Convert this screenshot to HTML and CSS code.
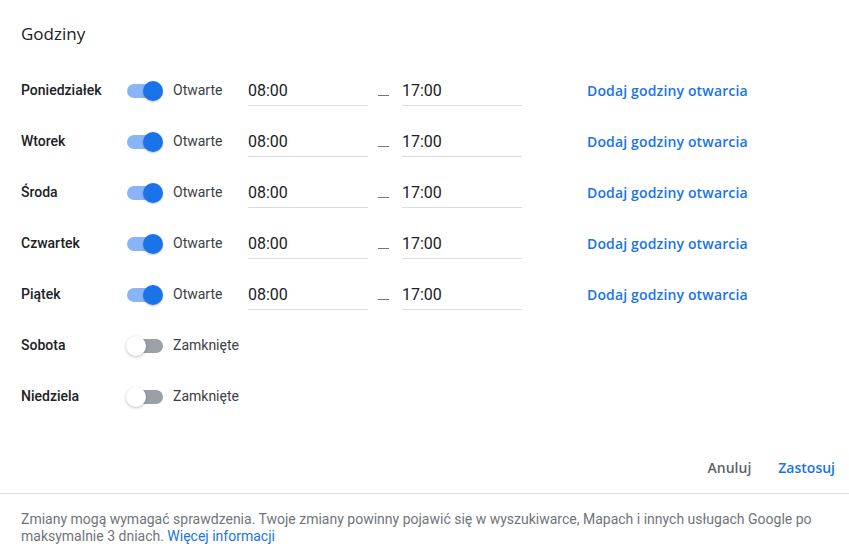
FILE: index.html
```html
<!DOCTYPE html>
<html lang="pl">
<head>
<meta charset="utf-8">
<title>Godziny</title>
<link rel="stylesheet" href="styles.css">
</head>
<body>
<div class="dialog">
  <h1 class="title">Godziny</h1>
  <div class="rows">
    <div class="row">
      <div class="day">Poniedziałek</div>
      <div class="toggle on"><span class="track"></span><span class="thumb"></span></div>
      <div class="state">Otwarte</div>
      <div class="time">08:00</div>
      <div class="dash"></div>
      <div class="time">17:00</div>
      <a class="add" href="#">Dodaj godziny otwarcia</a>
    </div>
    <div class="row">
      <div class="day">Wtorek</div>
      <div class="toggle on"><span class="track"></span><span class="thumb"></span></div>
      <div class="state">Otwarte</div>
      <div class="time">08:00</div>
      <div class="dash"></div>
      <div class="time">17:00</div>
      <a class="add" href="#">Dodaj godziny otwarcia</a>
    </div>
    <div class="row">
      <div class="day">Środa</div>
      <div class="toggle on"><span class="track"></span><span class="thumb"></span></div>
      <div class="state">Otwarte</div>
      <div class="time">08:00</div>
      <div class="dash"></div>
      <div class="time">17:00</div>
      <a class="add" href="#">Dodaj godziny otwarcia</a>
    </div>
    <div class="row">
      <div class="day">Czwartek</div>
      <div class="toggle on"><span class="track"></span><span class="thumb"></span></div>
      <div class="state">Otwarte</div>
      <div class="time">08:00</div>
      <div class="dash"></div>
      <div class="time">17:00</div>
      <a class="add" href="#">Dodaj godziny otwarcia</a>
    </div>
    <div class="row">
      <div class="day">Piątek</div>
      <div class="toggle on"><span class="track"></span><span class="thumb"></span></div>
      <div class="state">Otwarte</div>
      <div class="time">08:00</div>
      <div class="dash"></div>
      <div class="time">17:00</div>
      <a class="add" href="#">Dodaj godziny otwarcia</a>
    </div>
    <div class="row">
      <div class="day">Sobota</div>
      <div class="toggle off"><span class="track"></span><span class="thumb"></span></div>
      <div class="state">Zamknięte</div>
    </div>
    <div class="row">
      <div class="day">Niedziela</div>
      <div class="toggle off"><span class="track"></span><span class="thumb"></span></div>
      <div class="state">Zamknięte</div>
    </div>
  </div>
  <div class="actions">
    <button class="btn cancel">Anuluj</button>
    <button class="btn apply">Zastosuj</button>
  </div>
  <div class="footer">
    <div class="line">Zmiany mogą wymagać sprawdzenia. Twoje zmiany powinny pojawić się w wyszukiwarce, Mapach i innych usługach Google po</div>
    <div class="line">maksymalnie 3 dniach. <a href="#" class="more">Więcej informacji</a></div>
  </div>
</div>
</body>
</html>
```

FILE: styles.css
```css
* { box-sizing: border-box; }

html, body {
  margin: 0;
  padding: 0;
  background: #ffffff;
}

body {
  font-family: Roboto, "Liberation Sans", Arial, sans-serif;
  color: #202124;
}

.dialog {
  width: 849px;
  height: 559px;
  display: flex;
  flex-direction: column;
}

.title {
  margin: 0;
  padding: 22px 21px 19px;
  font-family: "Open Sans", Roboto, sans-serif;
  font-size: 17px;
  line-height: 24px;
  font-weight: 400;
  color: #202124;
}

.rows {
  display: flex;
  flex-direction: column;
  padding-left: 21px;
}

.row {
  height: 51px;
  display: flex;
  align-items: center;
}

.day {
  width: 105px;
  font-size: 14px;
  font-weight: 500;
  color: #202124;
  margin-top: -1px;
}

.toggle {
  position: relative;
  width: 37px;
  height: 20px;
  margin-right: 10px;
}

.toggle .track {
  position: absolute;
  left: 1px;
  right: 2px;
  top: 3px;
  height: 14px;
  border-radius: 7px;
}

.toggle .thumb {
  position: absolute;
  top: 0;
  width: 20px;
  height: 20px;
  border-radius: 50%;
}

.toggle.on .track { background: #8ab4f8; }
.toggle.on .thumb {
  left: 17px;
  background: #1a73e8;
  box-shadow: 0 1px 2px rgba(60, 64, 67, 0.3);
}

.toggle.off .track { background: #9aa0a6; left: 4px; right: 0; }
.toggle.off .thumb {
  left: 0;
  background: #ffffff;
  box-shadow: 0 1px 3px rgba(60, 64, 67, 0.35);
}

.state {
  width: 75px;
  font-size: 14px;
  color: #3c4043;
  margin-top: -1px;
}

.time {
  width: 120px;
  padding: 6px 0 4px;
  line-height: 20px;
  font-size: 16px;
  color: #202124;
  border-bottom: 1px solid #dadce0;
}

.dash {
  width: 11px;
  height: 1px;
  margin: 9px 13px 0 10px;
  background: #70757a;
}

.add {
  margin-left: 65px;
  font-family: "Open Sans", Roboto, sans-serif;
  font-size: 14px;
  font-weight: 600;
  letter-spacing: 0.15px;
  color: #1a73e8;
  text-decoration: none;
  margin-top: -1px;
}

.actions {
  display: flex;
  justify-content: flex-end;
  gap: 11px;
  padding: 27px 6px 8px 0;
}

.btn {
  height: 36px;
  padding: 0 8px;
  border: none;
  background: transparent;
  font-family: "Open Sans", Roboto, sans-serif;
  font-size: 14px;
  font-weight: 600;
  cursor: pointer;
}

.btn.cancel { color: #5f6368; }
.btn.apply { color: #1a73e8; }

.footer {
  border-top: 1px solid #dadce0;
  padding: 17px 16px 0 21px;
  font-size: 14px;
  line-height: 17px;
  color: #70757a;
}

.line {
  white-space: nowrap;
}

.more {
  color: #1a73e8;
  text-decoration: none;
}
```
